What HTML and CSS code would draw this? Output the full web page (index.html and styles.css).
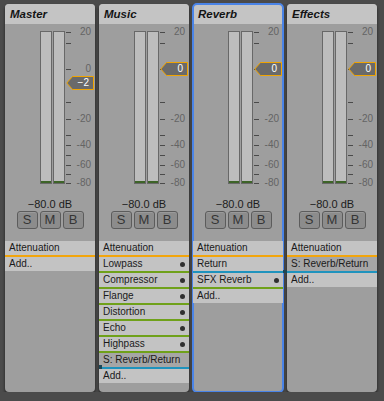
FILE: index.html
```html
<!DOCTYPE html>
<html lang="en">

<head>
    <meta charset="UTF-8">
    <meta name="viewport" content="width=device-width, initial-scale=1.0">
    <title>Mixer</title>
    <link rel="stylesheet" href="styles.css">
</head>

<body>
    <div class="mixer">
        <div class="strip">
            <div class="strip-title">Master</div>
            <div class="meter">
                <div class="bars"><div class="bar"></div><div class="bar"></div></div>
                <div class="scale"></div>
                <div class="marker" style="top: 45px">
                    <svg width="28" height="14" viewBox="0 0 28 14"><polygon points="0.8,7 6.5,0.5 27.5,0.5 27.5,13.5 6.5,13.5" /></svg>
                    <span>&minus;2</span>
                </div>
            </div>
            <div class="level">&minus;80.0 dB</div>
            <div class="buttons"><button>S</button><button>M</button><button>B</button></div>
            <ul class="effects">
                <li class="row att">Attenuation</li>
                <li class="row">Add..</li>
            </ul>
        </div>

        <div class="strip">
            <div class="strip-title">Music</div>
            <div class="meter">
                <div class="bars"><div class="bar"></div><div class="bar"></div></div>
                <div class="scale at-zero"></div>
                <div class="marker" style="top: 31px">
                    <svg width="28" height="14" viewBox="0 0 28 14"><polygon points="0.8,7 6.5,0.5 27.5,0.5 27.5,13.5 6.5,13.5" /></svg>
                    <span>0</span>
                </div>
            </div>
            <div class="level">&minus;80.0 dB</div>
            <div class="buttons"><button>S</button><button>M</button><button>B</button></div>
            <ul class="effects">
                <li class="row att">Attenuation</li>
                <li class="row fx dot">Lowpass</li>
                <li class="row fx dot">Compressor</li>
                <li class="row fx dot">Flange</li>
                <li class="row fx dot">Distortion</li>
                <li class="row fx dot">Echo</li>
                <li class="row fx dot">Highpass</li>
                <li class="row send link-left">S: Reverb/Return</li>
                <li class="row">Add..</li>
            </ul>
        </div>

        <div class="strip selected">
            <div class="strip-title">Reverb</div>
            <div class="meter">
                <div class="bars"><div class="bar"></div><div class="bar"></div></div>
                <div class="scale at-zero"></div>
                <div class="marker" style="top: 31px">
                    <svg width="28" height="14" viewBox="0 0 28 14"><polygon points="0.8,7 6.5,0.5 27.5,0.5 27.5,13.5 6.5,13.5" /></svg>
                    <span>0</span>
                </div>
            </div>
            <div class="level">&minus;80.0 dB</div>
            <div class="buttons"><button>S</button><button>M</button><button>B</button></div>
            <ul class="effects">
                <li class="row att">Attenuation</li>
                <li class="row return">Return</li>
                <li class="row fx dot">SFX Reverb</li>
                <li class="row">Add..</li>
            </ul>
        </div>

        <div class="strip">
            <div class="strip-title">Effects</div>
            <div class="meter">
                <div class="bars"><div class="bar"></div><div class="bar"></div></div>
                <div class="scale at-zero"></div>
                <div class="marker" style="top: 31px">
                    <svg width="28" height="14" viewBox="0 0 28 14"><polygon points="0.8,7 6.5,0.5 27.5,0.5 27.5,13.5 6.5,13.5" /></svg>
                    <span>0</span>
                </div>
            </div>
            <div class="level">&minus;80.0 dB</div>
            <div class="buttons"><button>S</button><button>M</button><button>B</button></div>
            <ul class="effects">
                <li class="row att">Attenuation</li>
                <li class="row send link-gap">S: Reverb/Return</li>
                <li class="row">Add..</li>
            </ul>
        </div>
    </div>

    <script>
        // dB scale: tick offsets from the top of the meter, labels on some of them
        const ticks = [1, 12, 38, 71, 88, 104, 114, 124, 134, 143, 152];
        const labels = { 1: '20', 38: '0', 88: '-20', 114: '-40', 134: '-60', 152: '-80' };

        document.querySelectorAll('.scale').forEach(function (scale) {
            // the fader marker sits over the 0 label on these strips
            const hideZero = scale.classList.contains('at-zero');

            ticks.forEach(function (y) {
                const tick = document.createElement('div');
                tick.className = 'tick';
                tick.style.top = y + 'px';
                scale.appendChild(tick);

                if (labels[y] && !(hideZero && y === 38)) {
                    const label = document.createElement('div');
                    label.className = 'tick-label';
                    label.style.top = (y - 5) + 'px';
                    label.textContent = labels[y];
                    scale.appendChild(label);
                }
            });
        });
    </script>
</body>

</html>
```

FILE: styles.css
```css
body {
    margin: 0;
    background-color: #4b4b4b;
    font-family: "Liberation Sans", Arial, sans-serif;
}

.mixer {
    display: flex;
    gap: 4px;
    padding: 4px 0 0 5px;
}

.strip {
    position: relative;
    width: 90px;
    height: 388px;
    background-color: #9e9e9e;
    border-radius: 4px;
    box-shadow: 0 2px 3px rgba(0, 0, 0, 0.6);
    display: flex;
    flex-direction: column;
}

.strip.selected {
    outline: 2px solid #4a84e8;
    outline-offset: -1px;
}

.strip-title {
    height: 20px;
    line-height: 20px;
    padding: 0 5px;
    background-color: #c4c4c4;
    border-radius: 4px 4px 0 0;
    font-size: 11.5px;
    font-weight: bold;
    font-style: italic;
    color: #141414;
}

.meter {
    position: relative;
    display: flex;
    height: 153px;
    margin-top: 7px;
}

.bars {
    display: flex;
    gap: 1px;
    margin-left: 35px;
}

.bar {
    position: relative;
    width: 12px;
    height: 153px;
    box-sizing: border-box;
    border: 1px solid #686868;
    background-color: #bdbdbd;
}

.bar::after {
    content: '';
    position: absolute;
    left: 0;
    right: 0;
    bottom: 0;
    height: 2px;
    background-color: #3d6428;
}

.scale {
    position: relative;
    flex: 1;
    margin-left: 1px;
}

.tick {
    position: absolute;
    left: 0;
    width: 5px;
    height: 1px;
    background-color: #4a4a4a;
}

.tick-label {
    position: absolute;
    right: 4px;
    line-height: 10px;
    font-size: 10px;
    color: #646464;
}

.marker {
    position: absolute;
    left: 61px;
    width: 28px;
    height: 14px;
}

.marker svg {
    position: absolute;
    left: 0;
    top: 0;
}

.marker polygon {
    fill: #6a6a6a;
    stroke: #f0a400;
    stroke-width: 1;
}

.marker span {
    position: relative;
    display: block;
    text-align: right;
    padding-right: 5px;
    line-height: 14px;
    font-size: 10px;
    color: #ffffff;
}

.level {
    margin-top: 14px;
    line-height: 13px;
    text-align: center;
    font-size: 11px;
    color: #1c1c1c;
}

.buttons {
    display: flex;
    justify-content: center;
    gap: 2px;
}

.buttons button {
    width: 21px;
    height: 18px;
    padding: 0;
    border: 1px solid #5c5c5c;
    border-radius: 3px;
    background-color: #8c8c8c;
    box-shadow: inset 0 1px 0 rgba(255, 255, 255, 0.12);
    font-family: "Liberation Sans", Arial, sans-serif;
    font-size: 13px;
    line-height: 16px;
    color: #353535;
}

.effects {
    list-style: none;
    margin: 12px 0 0;
    padding: 0;
}

.row {
    position: relative;
    height: 14px;
    line-height: 14px;
    padding: 0 4px;
    background-color: #c3c3c3;
    font-size: 10px;
    color: #1a1a1a;
}

.row.att {
    border-bottom: 2px solid #f2a50c;
}

.row.fx {
    border-bottom: 2px solid #6fa11a;
}

.row.return {
    border-bottom: 2px solid #1f93bd;
}

.row.send {
    background-color: #a6a6a6;
    border-bottom: 2px solid #1f93bd;
}

.row.dot::after {
    content: '';
    position: absolute;
    right: 4px;
    top: 5px;
    width: 5px;
    height: 5px;
    border-radius: 50%;
    background-color: #303030;
}

.row.link-left::before {
    content: '';
    position: absolute;
    left: 0;
    bottom: -2px;
    width: 3px;
    height: 4px;
    background-color: #1c4656;
}

.row.link-gap::before {
    content: '';
    position: absolute;
    left: -4px;
    bottom: -2px;
    width: 4px;
    height: 3px;
    background-color: #1c4656;
}
```
